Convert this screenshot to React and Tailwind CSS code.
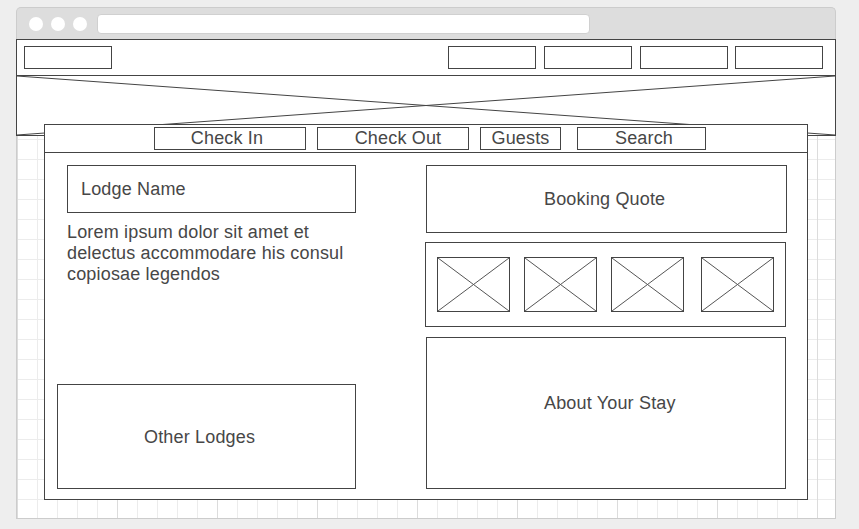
import React from "react";

function XBox({ className = "", stroke = "#555" }) {
  return (
    <div className={"border border-[#444] bg-white " + className}>
      <svg className="block w-full h-full" viewBox="0 0 100 100" preserveAspectRatio="none">
        <line x1="0" y1="0" x2="100" y2="100" stroke={stroke} strokeWidth="1" vectorEffect="non-scaling-stroke" />
        <line x1="100" y1="0" x2="0" y2="100" stroke={stroke} strokeWidth="1" vectorEffect="non-scaling-stroke" />
      </svg>
    </div>
  );
}

function Field({ w, className = "", children }) {
  return (
    <div
      className={
        "h-[23px] border border-[#444] flex items-center justify-center text-[18px] leading-[21px] tracking-[0.17px] text-[#474747] " +
        w +
        " " +
        className
      }
    >
      {children}
    </div>
  );
}

export default function App() {
  return (
    <div className="w-[859px] h-[529px] bg-[#eeeeee] pt-[7px] pl-[16px] font-['Liberation_Sans',Arial,sans-serif] overflow-hidden">
      <div className="w-[820px]">
        {/* title bar */}
        <div className="h-[32px] bg-[#dddddd] border-t border-x border-[#cccccc] rounded-t-[5px] flex items-center pl-[12px]">
          <div className="w-[14px] h-[14px] rounded-full bg-white" />
          <div className="w-[14px] h-[14px] rounded-full bg-white ml-[8px]" />
          <div className="w-[14px] h-[14px] rounded-full bg-white ml-[8px]" />
          <div className="w-[493px] h-[20px] ml-[10px] bg-white rounded-[4px] border border-[#d0d0d0]" />
        </div>

        {/* content area */}
        <div className="h-[480px] border-x border-b border-[#cccccc] bg-white [background-image:linear-gradient(to_right,#dcdcdc_1px,transparent_1px),linear-gradient(to_right,#ececec_1px,transparent_1px),linear-gradient(to_bottom,#ececec_1px,transparent_1px)] [background-size:100px_100%,20px_20px,20px_20px]">
          {/* header */}
          <div className="-mx-px h-[37px] border border-[#444] bg-white flex items-center pl-[7px] pr-[12px]">
            <div className="w-[88px] h-[23px] border border-[#444]" />
            <div className="flex-1" />
            <div className="w-[88px] h-[23px] border border-[#444]" />
            <div className="w-[88px] h-[23px] border border-[#444] ml-[8px]" />
            <div className="w-[88px] h-[23px] border border-[#444] ml-[8px]" />
            <div className="w-[88px] h-[23px] border border-[#444] ml-[7px]" />
          </div>

          {/* hero */}
          <div className="-mx-px h-[60px] border-x border-b border-[#444] bg-white">
            <svg className="block w-full h-full" viewBox="0 0 100 100" preserveAspectRatio="none">
              <line x1="0" y1="0" x2="100" y2="100" stroke="#444" strokeWidth="1" vectorEffect="non-scaling-stroke" />
              <line x1="100" y1="0" x2="0" y2="100" stroke="#444" strokeWidth="1" vectorEffect="non-scaling-stroke" />
            </svg>
          </div>

          {/* main box */}
          <div className="relative -mt-[12px] ml-[27px] w-[764px] h-[376px] border border-[#444] bg-white flex flex-col">
            {/* search bar */}
            <div className="h-[28px] border-b border-[#444] flex items-start pt-[2px] pl-[109px]">
              <Field w="w-[152px]" className="pr-[6px]">Check In</Field>
              <Field w="w-[152px]" className="ml-[11px] pl-[10px]">Check Out</Field>
              <Field w="w-[81px]" className="ml-[11px]">Guests</Field>
              <Field w="w-[129px]" className="ml-[16px] pl-[5px]">Search</Field>
            </div>

            {/* body */}
            <div className="flex-1 flex justify-between text-[18px] leading-[21px] tracking-[0.17px] text-[#474747]">
              {/* left column */}
              <div className="flex flex-col">
                <div className="mt-[12px] ml-[22px] w-[289px] h-[48px] border border-[#444] flex items-center pl-[13px] pt-[1px]">
                  Lodge Name
                </div>
                <div className="mt-[9px] ml-[22px]">
                  <div>Lorem ipsum dolor sit amet et</div>
                  <div>delectus accommodare his consul</div>
                  <div>copiosae legendos</div>
                </div>
                <div className="mt-auto mb-[10px] ml-[12px] w-[299px] h-[105px] border border-[#444] flex items-center pl-[86px] pt-[2px]">
                  Other Lodges
                </div>
              </div>

              {/* right column */}
              <div className="w-[362px] mr-[20px] flex flex-col">
                <div className="mt-[12px] ml-[1px] w-[361px] h-[68px] border border-[#444] flex items-center pl-[117px]">
                  Booking Quote
                </div>
                <div className="mt-[9px] w-[361px] h-[85px] border border-[#444] flex items-center pl-[11px]">
                  <XBox className="w-[73px] h-[55px]" />
                  <XBox className="w-[73px] h-[55px] ml-[14px]" />
                  <XBox className="w-[73px] h-[55px] ml-[14px]" />
                  <XBox className="w-[73px] h-[55px] ml-[17px]" />
                </div>
                <div className="mt-[10px] mb-[10px] ml-[1px] w-[360px] h-[152px] border border-[#444] pt-[55px] pl-[117px]">
                  About Your Stay
                </div>
              </div>
            </div>
          </div>
        </div>
      </div>
    </div>
  );
}
